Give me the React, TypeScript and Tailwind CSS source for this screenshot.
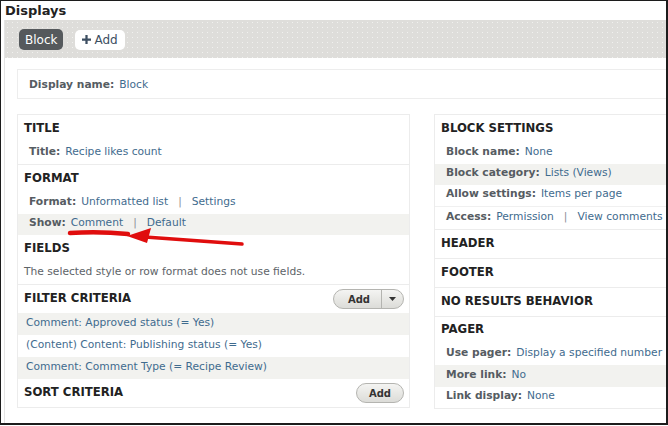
import type { ReactNode } from 'react';

const linkCls = 'text-[#3f6b8e]';
const labelCls = 'font-bold text-[#565c62] mr-[5px]';

function Heading({ children, right, h = 'h-[28px]' }: { children: ReactNode; right?: ReactNode; h?: string }) {
  return (
    <div className={`${h} flex items-center justify-between pl-[6px] pr-[5px]`}>
      <span className="text-[11.7px] font-bold text-[#222]">{children}</span>
      {right}
    </div>
  );
}

function Row({ children, gray, pl = 'pl-[11px]', h = 'h-[21px]' }: { children: ReactNode; gray?: boolean; pl?: string; h?: string }) {
  return (
    <div className={`${h} ${pl} pb-[2px] flex items-center text-[10.7px] whitespace-nowrap ${gray ? 'bg-[#f2f2ef]' : ''}`}>
      {children}
    </div>
  );
}

function Pipe() {
  return <span className="mx-[10px] text-[#8a9098]">|</span>;
}

function AddButton({ split }: { split?: boolean }) {
  return (
    <div className="h-[20px] flex items-center rounded-full border border-[#b4b4b0] bg-[linear-gradient(#f4f4f2,#dcdcd8)] text-[10px] font-bold text-[#333]">
      <span className={split ? 'pl-[14px] pr-[11px]' : 'px-[12px]'}>Add</span>
      {split && (
        <span className="h-full border-l border-[#b4b4b0] flex items-center px-[7px]">
          <svg width="7" height="4" viewBox="0 0 7 4"><path d="M0 0h7L3.5 4z" fill="#333" /></svg>
        </span>
      )}
    </div>
  );
}

export default function App() {
  return (
    <div className="w-[668px] h-[426px] bg-white font-['DejaVu_Sans',sans-serif]">
      <div className="relative w-[668px] h-[425px] overflow-hidden border border-b-2 border-r-2 border-[#1c1c1c]">
        <div className="h-[19px] pl-[4px] flex items-center text-[13px] font-bold text-[#222]">Displays</div>

        <div className="ml-[3px] w-[720px] h-[405px] border-l border-[#e4e4e4]">
          <div className="h-[38px] bg-[#dedddA] bg-[radial-gradient(circle,#f1f1ef_0.6px,transparent_0.9px)] bg-[length:5px_5px] flex items-center gap-[12px] pl-[14px] pt-[1px]">
            <div className="h-[21px] px-[6px] rounded-[5px] bg-[#55595c] text-white text-[12px] flex items-center">Block</div>
            <div className="h-[20px] px-[7px] rounded-[5px] bg-white text-[#3d4f62] text-[12px] flex items-center gap-[3px]">
              <svg width="9" height="9" viewBox="0 0 8 8"><path d="M3 0h2v3h3v2H5v3H3V5H0V3h3z" fill="#3d4f62" /></svg>
              Add
            </div>
          </div>

          <div className="pl-[12px] pt-[11px]">
            <div className="h-[30px] border border-[#ededed] pl-[11px] pt-[2px] flex items-center text-[10.7px]">
              <span className={labelCls}>Display name:</span>
              <span className={linkCls}>Block</span>
            </div>

            <div className="flex gap-[24px] mt-[15px] items-start">
              {/* left column */}
              <div className="w-[393px] shrink-0 border border-[#ececec]">
                <Heading>TITLE</Heading>
                <Row>
                  <span className={labelCls}>Title:</span>
                  <span className={linkCls}>Recipe likes count</span>
                </Row>
                <div className="border-t border-[#ececec]" />
                <Heading>FORMAT</Heading>
                <Row>
                  <span className={labelCls}>Format:</span>
                  <span className={linkCls}>Unformatted list</span>
                  <Pipe />
                  <span className={linkCls}>Settings</span>
                </Row>
                <Row gray>
                  <span className={labelCls}>Show:</span>
                  <span className={linkCls}>Comment</span>
                  <Pipe />
                  <span className={linkCls}>Default</span>
                </Row>
                <Heading>FIELDS</Heading>
                <Row pl="pl-[6px]" h="h-[21px]">
                  <span className="text-[#5d6368]">The selected style or row format does not use fields.</span>
                </Row>
                <div className="border-t border-[#ececec]" />
                <Heading right={<AddButton split />}>FILTER CRITERIA</Heading>
                <Row gray pl="pl-[8px]" h="h-[22px]">
                  <span className={linkCls}>Comment: Approved status (= Yes)</span>
                </Row>
                <Row pl="pl-[8px]" h="h-[22px]">
                  <span className={linkCls}>(Content) Content: Publishing status (= Yes)</span>
                </Row>
                <Row gray pl="pl-[8px]" h="h-[22px]">
                  <span className={linkCls}>Comment: Comment Type (= Recipe Review)</span>
                </Row>
                <Heading right={<AddButton />}>SORT CRITERIA</Heading>
              </div>

              {/* right column */}
              <div className="w-[300px] shrink-0 border border-[#ececec]">
                <Heading>BLOCK SETTINGS</Heading>
                <Row>
                  <span className={labelCls}>Block name:</span>
                  <span className={linkCls}>None</span>
                </Row>
                <Row gray>
                  <span className={labelCls}>Block category:</span>
                  <span className={linkCls}>Lists (Views)</span>
                </Row>
                <Row>
                  <span className={labelCls}>Allow settings:</span>
                  <span className={linkCls}>Items per page</span>
                </Row>
                <div className="border-t border-[#f0f0f0]" />
                <Row h="h-[22px]">
                  <span className={labelCls}>Access:</span>
                  <span className={linkCls}>Permission</span>
                  <Pipe />
                  <span className={linkCls}>View comments</span>
                </Row>
                <div className="border-t border-[#ececec]" />
                <Heading>HEADER</Heading>
                <div className="border-t border-[#ececec]" />
                <Heading>FOOTER</Heading>
                <div className="border-t border-[#ececec]" />
                <Heading>NO RESULTS BEHAVIOR</Heading>
                <div className="border-t border-[#ececec]" />
                <Heading h="h-[26px]">PAGER</Heading>
                <Row h="h-[22px]">
                  <span className={labelCls}>Use pager:</span>
                  <span className={linkCls}>Display a specified number</span>
                </Row>
                <Row gray h="h-[22px]">
                  <span className={labelCls}>More link:</span>
                  <span className={linkCls}>No</span>
                </Row>
                <Row>
                  <span className={labelCls}>Link display:</span>
                  <span className={linkCls}>None</span>
                </Row>
              </div>
            </div>
          </div>
        </div>

        <svg className="absolute left-0 top-0 pointer-events-none" width="668" height="426">
          <path d="M69 232 Q98 230 127 233" stroke="#e00d0d" strokeWidth="4.5" strokeLinecap="round" fill="none" />
          <path d="M144 236 L241 243" stroke="#e00d0d" strokeWidth="3.5" strokeLinecap="round" fill="none" />
          <path d="M126 235 L150 227 L146 242 Z" fill="#e00d0d" />
        </svg>
      </div>
    </div>
  );
}
